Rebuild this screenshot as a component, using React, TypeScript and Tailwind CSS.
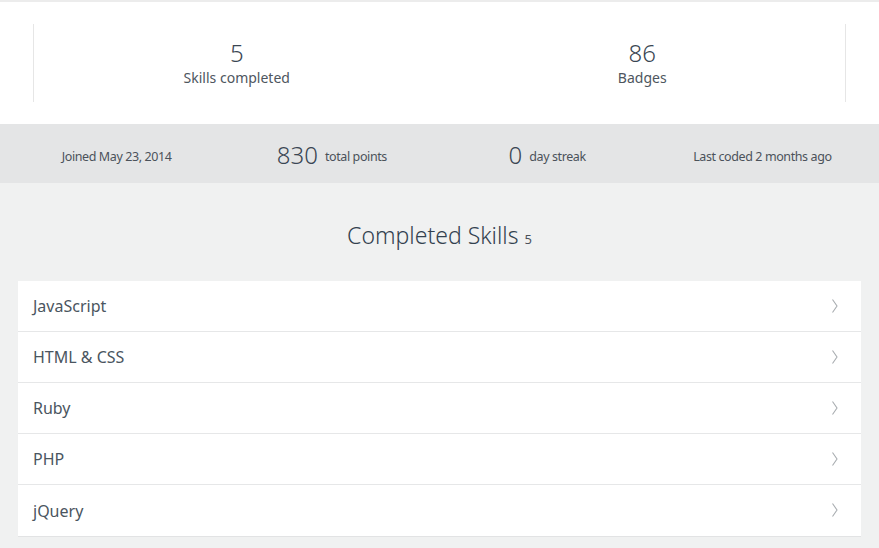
import React from "react";

const skills = ["JavaScript", "HTML & CSS", "Ruby", "PHP", "jQuery"];

function Chevron() {
  return (
    <svg width="8" height="16" viewBox="0 0 8 16" fill="none">
      <path d="M1.5 1.5 L6 8 L1.5 14.5" stroke="#a9adb1" strokeWidth="1.1" />
    </svg>
  );
}

export default function App() {
  return (
    <div
      className="w-[879px] h-[548px] overflow-hidden bg-[#f0f1f1] text-[#3d4a56]"
      style={{ fontFamily: '"Noto Sans", "Open Sans", sans-serif' }}
    >
      <div className="h-[2px] bg-[#ececec]" />
      <div className="bg-white h-[122px] pt-[22px]">
        <div className="mx-[33px] h-[78px] border-l border-r border-[#e6e6e6] grid grid-cols-2">
          <div className="flex flex-col items-center pt-[14px]">
            <div className="text-[24px] leading-[30px] font-light text-[#3a4653]">5</div>
            <div className="text-[14px] leading-[18px] text-[#4e565e] mt-[1px]">Skills completed</div>
          </div>
          <div className="flex flex-col items-center pt-[14px]">
            <div className="text-[24px] leading-[30px] font-light text-[#3a4653]">86</div>
            <div className="text-[14px] leading-[18px] text-[#4e565e] mt-[1px]">Badges</div>
          </div>
        </div>
      </div>
      <div className="h-[59px] bg-[#e4e5e6] grid grid-cols-4 px-[9px] items-center pt-[7px]">
        <div className="text-center text-[12.5px] text-[#4b525a] tracking-[-0.4px]">Joined May 23, 2014</div>
        <div className="flex items-center justify-center gap-[7px]">
          <span className="text-[24px] font-light text-[#3a4653] leading-none -mt-[4px]">830</span>
          <span className="text-[12.5px] text-[#4b525a] tracking-[-0.4px]">total points</span>
        </div>
        <div className="flex items-center justify-center gap-[7px]">
          <span className="text-[24px] font-light text-[#3a4653] leading-none -mt-[4px]">0</span>
          <span className="text-[12.5px] text-[#4b525a] tracking-[-0.4px]">day streak</span>
        </div>
        <div className="text-center text-[12.5px] text-[#4b525a] tracking-[-0.4px]">Last coded 2 months ago</div>
      </div>
      <div className="pt-[35px] flex justify-center items-baseline gap-[6px]">
        <span className="text-[23px] font-light text-[#33414f]">Completed Skills</span>
        <span className="text-[13px] text-[#4b525a]">5</span>
      </div>
      <div className="mx-[18px] mt-[28px] bg-white border-b border-[#e2e3e4]">
        {skills.map((s, i) => (
          <div
            key={s}
            className={`h-[51px] flex items-center justify-between pl-[15px] pr-[22px] ${i < skills.length - 1 ? "border-b border-[#e6e7e8]" : ""}`}
          >
            <span className="text-[16px] text-[#4a5560] pt-[1px]">{s}</span>
            <Chevron />
          </div>
        ))}
      </div>
    </div>
  );
}
